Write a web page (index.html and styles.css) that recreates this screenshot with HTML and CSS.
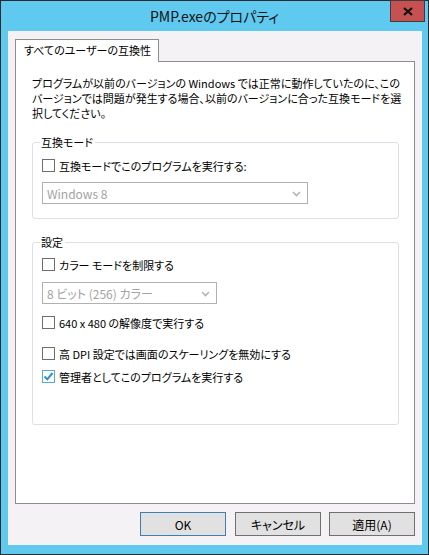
FILE: index.html
```html
<!DOCTYPE html>
<html lang="ja">
<head>
<meta charset="utf-8">
<title>PMP.exeのプロパティ</title>
<link rel="stylesheet" href="styles.css">
</head>
<body>
<div class="window">
  <div class="titlebar">
    <span class="title">PMP.exeのプロパティ</span>
    <div class="close"><svg width="10" height="9" viewBox="0 0 10 9"><path d="M1 1 L9 8 M9 1 L1 8" stroke="#111" stroke-width="2.2" fill="none"/></svg></div>
  </div>
  <div class="client">
    <div class="tabs"><div class="tab">すべてのユーザーの互換性</div></div>
    <div class="panel">
      <p class="desc">プログラムが以前のバージョンの Windows では正常に動作していたのに、この<br>バージョンでは問題が発生する場合、以前のバージョンに合った互換モードを選<br>択してください。</p>
      <fieldset class="group g1">
        <legend>互換モード</legend>
        <div class="check first"><span class="box"></span><span>互換モードでこのプログラムを実行する:</span></div>
        <div class="combo wide"><span>Windows 8</span><svg class="chev" width="9" height="6" viewBox="0 0 9 6"><path d="M1 1 L4.5 4.5 L8 1" stroke="#b4b4b4" stroke-width="1.6" fill="none"/></svg></div>
      </fieldset>
      <fieldset class="group g2">
        <legend>設定</legend>
        <div class="check first"><span class="box"></span><span>カラー モードを制限する</span></div>
        <div class="combo narrow"><span>8 ビット (256) カラー</span><svg class="chev" width="9" height="6" viewBox="0 0 9 6"><path d="M1 1 L4.5 4.5 L8 1" stroke="#b4b4b4" stroke-width="1.6" fill="none"/></svg></div>
        <div class="check res"><span class="box"></span><span>640 x 480 の解像度で実行する</span></div>
        <div class="check dpi"><span class="box"></span><span>高 DPI 設定では画面のスケーリングを無効にする</span></div>
        <div class="check admin"><span class="box checked"><svg width="11" height="11" viewBox="0 0 11 11"><path d="M1.5 5.5 L4.3 8.3 L9.5 2" stroke="#2b8fd8" stroke-width="2" fill="none"/></svg></span><span>管理者としてこのプログラムを実行する</span></div>
      </fieldset>
    </div>
    <div class="buttons">
      <button class="btn default">OK</button>
      <button class="btn">キャンセル</button>
      <button class="btn">適用(A)</button>
    </div>
  </div>
</div>
</body>
</html>
```

FILE: styles.css
```css
* { box-sizing: border-box; }
html, body { margin: 0; padding: 0; background: #5fc9ef; }
body {
  font-family: "Noto Sans CJK JP", "Noto Sans", sans-serif;
  font-size: 11px;
  font-feature-settings: "palt" 1;
  color: #000;
}
.window {
  position: relative;
  width: 429px;
  height: 555px;
  border: 1px solid #2b2b2b;
  background: #5fc9ef;
  display: flex;
  flex-direction: column;
}
.titlebar {
  height: 30px;
  line-height: 30px;
  text-align: center;
}
.title {
  font-size: 14px;
  color: #111;
}
.close {
  position: absolute;
  left: 389px;
  top: -1px;
  width: 35px;
  height: 22px;
  background: #c75050;
  border: 1px solid #3d3d3d;
  display: flex;
  align-items: center;
  justify-content: center;
}
.close svg { display: block; }
.client {
  margin: 0 6px 0 7px;
  height: 514px;
  background: #f5f2f6;
  padding: 8px 7px 0 7px;
}
.tabs { display: flex; height: 22px; }
.tab {
  position: relative;
  z-index: 1;
  height: 23px;
  padding: 0 7px 0 8px;
  border: 1px solid #8d8d8d;
  border-bottom: none;
  background: #fff;
  line-height: 21px;
  white-space: nowrap;
}
.panel {
  height: 443px;
  border: 1px solid #8d8d8d;
  background: #fff;
  padding: 14px 15px 0 16px;
}
.desc {
  margin: 0;
  line-height: 15px;
  white-space: nowrap;
}
.group {
  margin: 14px 0 0 0;
  padding: 0 9px 0 7px;
  border: 1px solid #dbe0e8;
  border-radius: 3px;
  min-width: 0;
}
.g1 { padding-bottom: 14px; }
.g2 { margin-top: 16px; padding-bottom: 40px; }
legend {
  padding: 0 2px 0 1px;
  line-height: 14px;
}
.check {
  display: flex;
  align-items: center;
  height: 15px;
  margin-left: 2px;
  white-space: nowrap;
}
.check.first { margin-top: 9px; }
.g2 .check.first { margin-top: 8px; }
.check.res { margin-top: 11px; }
.check.dpi { margin-top: 16px; }
.check.admin { margin-top: 8px; }
.box {
  width: 13px;
  height: 13px;
  border: 1px solid #6e6e6e;
  background: #fff;
  margin-right: 4px;
  flex: none;
  display: flex;
  align-items: center;
  justify-content: center;
}
.box.checked { border-color: #5ba5df; }
.box svg { display: block; }
.combo {
  margin: 9px 0 0 2px;
  height: 22px;
  border: 1px solid #b1b1b1;
  background: #fff;
  color: #a3a3a3;
  display: flex;
  align-items: center;
  justify-content: space-between;
  padding: 0 6px 0 4px;
  white-space: nowrap;
  font-size: 12px;
}
.g2 .combo { margin-top: 10px; }
.combo.wide { width: 266px; }
.combo.narrow { width: 175px; }
.chev { display: block; margin-top: 1px; }
.buttons {
  display: flex;
  justify-content: flex-end;
  gap: 9px;
  margin-top: 8px;
}
.btn {
  width: 86px;
  height: 24px;
  border: 1px solid #707070;
  background: #e1e1e1;
  font-family: inherit;
  font-size: 12px;
  font-feature-settings: "palt" 1;
  color: #000;
  padding: 0;
  margin: 0;
}
.btn:last-child { margin-left: -1px; }
.btn.default { border-color: #3c7fb1; }
```
